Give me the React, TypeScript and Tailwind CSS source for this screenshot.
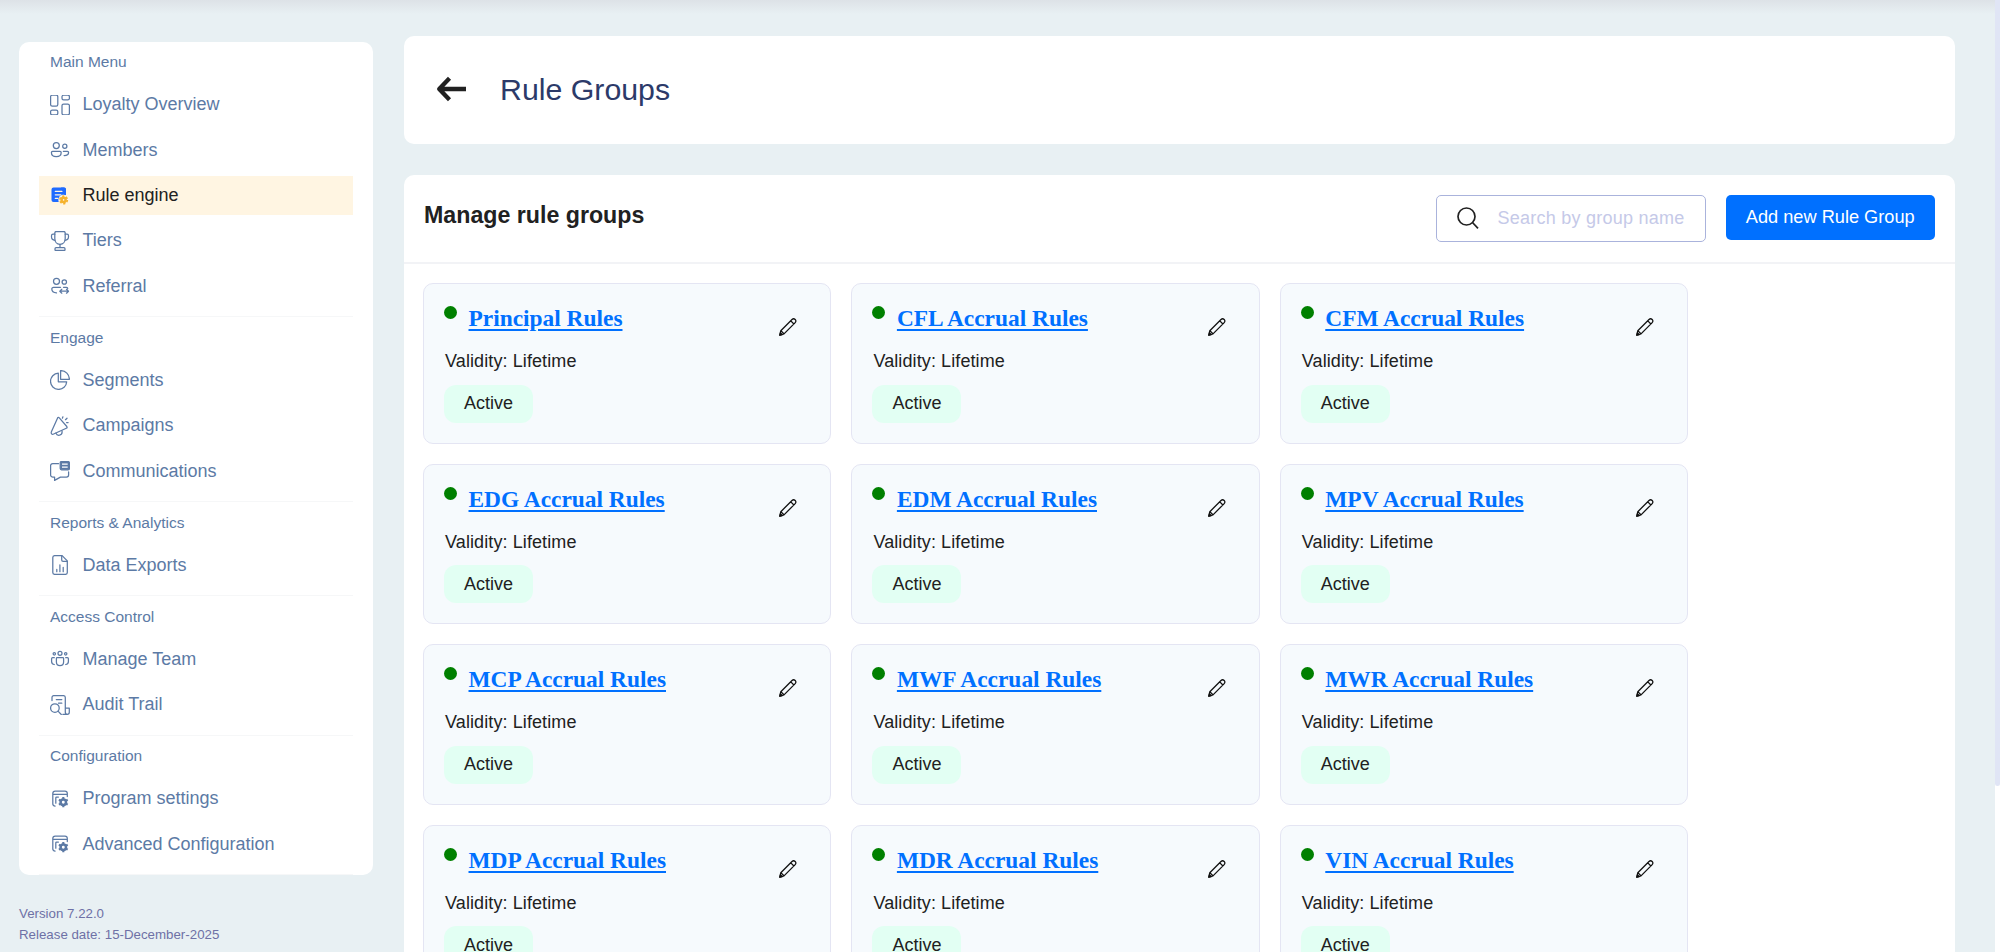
import type { ReactNode } from 'react'
import clsx from 'clsx'

function Icon({ children }: { children: ReactNode }) {
  return (
    <svg
      viewBox="0 0 20 20"
      className="size-5 shrink-0"
      fill="none"
      stroke="currentColor"
      strokeWidth="1.25"
      strokeLinecap="round"
      strokeLinejoin="round"
    >
      {children}
    </svg>
  )
}

const overviewIcon = (
  <Icon>
    <rect x="0.6" y="0.1" width="7.2" height="11" rx="1.6" />
    <rect x="12" y="0.1" width="7.400" height="4.800" rx="1.6" />
    <rect x="0.6" y="15" width="7.2" height="4.800" rx="1.6" />
    <rect x="12" y="9" width="7.4" height="10.800" rx="1.6" />
  </Icon>
)

const membersIcon = (
  <Icon>
    <circle cx="6.3" cy="5.5" r="3" />
    <circle cx="14.8" cy="6.2" r="2.1" />
    <path d="M2.6 11.3h7.5c.7 0 1.100.4 1.100 1.100 0 2.600-2 4.200-4.900 4.200s-4.900-1.600-4.900-4.200c0-.7.5-1.100 1.200-1.100zM13.4 11.400h4.100c.7 0 1.100.4 1.100 1 0 1.900-1.700 3.100-4.500 3.100" />
  </Icon>
)

const rulesIcon = (
  <Icon>
    <path
      d="M3.500 1.500h10.500a2 2 0 0 1 2 2v12.500H3.500a2 2 0 0 1-2-2V3.500a2 2 0 0 1 2-2z"
      fill="#1f6bff"
      stroke="none"
    />
    <path d="M5.300 5.300h7.700M5.300 8.800h5.500M5.300 12.300h2.500" stroke="#fff5e2" strokeWidth="1.300" />
    <circle cx="13.600" cy="13.900" r="5.300" fill="#fff5e2" stroke="none" />
    <path d="M11 1.500h3a2 2 0 0 1 2 2v5.500l-2.500-.5z" fill="#1f6bff" stroke="none" />
    <circle cx="13.600" cy="13.900" r="3.300" fill="#f5b22e" stroke="none" />
    <circle
      cx="13.600"
      cy="13.900"
      r="3.700"
      stroke="#f5b22e"
      strokeWidth="1.700"
      strokeDasharray="2.200 1.675"
      strokeLinecap="butt"
    />
    <circle cx="13.600" cy="13.900" r="0.800" fill="#fff5e2" stroke="none" />
  </Icon>
)

const tiersIcon = (
  <Icon>
    <path d="M4.800 2c0-.9.600-1.500 1.500-1.500h7.400c.9 0 1.500.6 1.500 1.500v5.500c0 3.100-2 5.800-5.200 5.800S4.800 10.600 4.800 7.500z" />
    <path d="M4.800 3.200H3c-1 0-1.500.7-1.500 1.600v1c0 2 1.600 3.300 3.500 3.500M15.200 3.200H17c1 0 1.500.7 1.500 1.600v1c0 2-1.600 3.300-3.500 3.500M10 13.300v2.900M6 16.700h8c.6 0 1 .4 1 1v1c0 .4-.3.700-.7.700H5.700c-.4 0-.7-.3-.7-.7v-1c0-.6.4-1 1-1z" />
  </Icon>
)

const referralIcon = (
  <Icon>
    <circle cx="6.500" cy="5.300" r="3" />
    <circle cx="14.300" cy="6" r="2.200" />
    <path d="M10.500 11.300H3.600c-1.200 0-1.800.8-1.800 1.700 0 2.300 1.700 3.700 4.700 3.900M13.500 11.300h3c.8 0 1.200.5 1.200 1.200M10 15.200h8.300M11.800 13.300l-2 1.900 2 2M16.500 13.300l2 1.900-2 2" />
  </Icon>
)

const segmentsIcon = (
  <Icon>
    <path d="M8.300 3.200a8.100 8.100 0 1 0 8.400 8.600H8.300z" />
    <path d="M10.600.6c5 0 8.800 3.700 8.800 8.700h-8.800z" />
  </Icon>
)

const campaignsIcon = (
  <Icon>
    <path d="M7.600 1.900c.4-.8 1.100-.8 1.700-.1l7.500 8.700c.6.800.4 1.400-.5 1.700L3.700 18c-1.800.8-3.100-.5-2.300-2.300z" />
    <path d="M5.900 17.100c.6 1.600 2 2.400 3.600 2.100 1.900-.4 2.900-2 2.500-4.300M12.400 2.200l.5-1.400M15.500 3.700l1.500-1.500M16.600 6.500h1.500" />
  </Icon>
)

const communicationsIcon = (
  <Icon>
    <path d="M8.500 2.700H2.700C1.400 2.700.6 3.500.6 4.800v9.300c0 1.200.8 2 2.100 2h1.900v3.300l5.800-3.300h6c1.300 0 2.200-.8 2.200-2v-3.200" />
    <rect x="10.200" y="0.600" width="9.200" height="8.200" rx="1.200" fill="currentColor" />
    <path d="M12 3.200h5.700M12 6.200h5.700" stroke="#fff" strokeLinecap="butt" />
  </Icon>
)

const exportsIcon = (
  <Icon>
    <path d="M4.900.6h7.200l5.200 5.300v11.500c0 1.200-.8 2-2 2H4.900c-1.300 0-2.100-.8-2.100-2V2.600c0-1.200.8-2 2.100-2z" />
    <path d="M11.700.8v4.100c0 .9.500 1.400 1.400 1.400h4M6.800 14.400v2.300M9.900 9.800v6.900M13.200 12.300v4.400" />
  </Icon>
)

const teamIcon = (
  <Icon>
    <circle cx="10" cy="4.300" r="2" />
    <circle cx="4.300" cy="4.800" r="1.200" />
    <circle cx="15.700" cy="4.800" r="1.200" />
    <path d="M7.200 8.700h5.600c.5 0 .8.300.8.800v3.400c0 2-1.500 3.600-3.600 3.600s-3.600-1.600-3.600-3.600V9.500c0-.5.300-.8.800-.8zM4.300 8.700H2.600c-.6 0-1 .4-1 1v2.800c0 1.700 1 2.800 2.700 3M15.700 8.700h1.700c.6 0 1 .4 1 1v2.800c0 1.700-1 2.800-2.700 3" />
  </Icon>
)

const auditIcon = (
  <Icon>
    <path d="M2 5.500V2.600C2 1.400 2.800.6 4 .6h9.300c1.200 0 2 .8 2 2v14.600c0 1.300.9 2.100 2 2.100s2-.9 2-2.100v-4h-4M17.300 19.300h-4.500M6.300 4.600h5.500M8.500 8.200h3.300" />
    <circle cx="4.900" cy="13.100" r="4.300" />
    <path d="M8 16.100l3.300 3.400" />
  </Icon>
)

const settingsIcon = (
  <Icon>
    <path d="M17.300 7.500V4.500c0-1.400-1-2.300-2.300-2.300H5.200C3.800 2.200 2.800 3.100 2.800 4.500v10.300c0 1.400.9 2.200 2.300 2.200M3 5.300h14M5.800 14.200V8.900c0-.6.300-.9.900-.9h1.700" />
    <circle cx="13.300" cy="13.200" r="2.700" strokeWidth="2.500" />
    <path
      d="M13.300 8.100v2.200M13.300 16.100v2.200M8.900 10.700l1.900 1.100M15.800 14.600l1.900 1.100M8.900 15.700l1.900-1.100M15.800 11.800l1.900-1.100"
      strokeWidth="2.100"
      strokeLinecap="butt"
    />
  </Icon>
)

const sections = [
  {
    title: 'Main Menu',
    items: [
      { label: 'Loyalty Overview', icon: overviewIcon },
      { label: 'Members', icon: membersIcon },
      { label: 'Rule engine', icon: rulesIcon, active: true },
      { label: 'Tiers', icon: tiersIcon },
      { label: 'Referral', icon: referralIcon },
    ],
  },
  {
    title: 'Engage',
    items: [
      { label: 'Segments', icon: segmentsIcon },
      { label: 'Campaigns', icon: campaignsIcon },
      { label: 'Communications', icon: communicationsIcon },
    ],
  },
  {
    title: 'Reports & Analytics',
    items: [{ label: 'Data Exports', icon: exportsIcon }],
  },
  {
    title: 'Access Control',
    items: [
      { label: 'Manage Team', icon: teamIcon },
      { label: 'Audit Trail', icon: auditIcon },
    ],
  },
  {
    title: 'Configuration',
    items: [
      { label: 'Program settings', icon: settingsIcon },
      { label: 'Advanced Configuration', icon: settingsIcon },
    ],
  },
]

const ruleGroups = [
  'Principal Rules',
  'CFL Accrual Rules',
  'CFM Accrual Rules',
  'EDG Accrual Rules',
  'EDM Accrual Rules',
  'MPV Accrual Rules',
  'MCP Accrual Rules',
  'MWF Accrual Rules',
  'MWR Accrual Rules',
  'MDP Accrual Rules',
  'MDR Accrual Rules',
  'VIN Accrual Rules',
]

function Sidebar() {
  return (
    <aside className="w-[354px] shrink-0">
      <nav className="rounded-[10px] bg-white px-5">
        {sections.map((section) => (
          <section key={section.title} className="border-b border-[#f6f7f8] pb-[4.3px]">
            <h2 className="flex h-[43.2px] items-center pb-[3px] pl-[11px] text-[15.5px]">{section.title}</h2>
            {section.items.map((item) => (
              <a
                key={item.label}
                className={clsx(
                  'mb-[5.8px] flex h-[39.7px] items-center gap-[12.5px] pl-[11px] text-[18px]',
                  'active' in item && 'bg-[#fff5e2] text-[#212121]',
                )}
              >
                {item.icon}
                {item.label}
              </a>
            ))}
          </section>
        ))}
      </nav>
      <footer className="mt-[29px] text-[13.3px] leading-[20.5px] text-[#6e71a6]">
        <p>Version 7.22.0</p>
        <p>Release date: 15-December-2025</p>
      </footer>
    </aside>
  )
}

function RuleGroupCard({ name }: { name: string }) {
  return (
    <article className="h-[160.5px] rounded-[10px] border border-[#e4e5f3] bg-[#f6fafd] px-5 pt-[19px]">
      <div className="flex h-[33px]">
        <span className="mt-[3px] size-[13px] shrink-0 rounded-full bg-[#008000]" />
        <a className="ml-[11.5px] font-['Liberation_Serif',serif] text-[23.4px] leading-[30px] font-bold text-[#0070ff] underline decoration-2 underline-offset-[3px]">
          {name}
        </a>
        <svg
          viewBox="0 0 18 18"
          className="mt-[15px] mr-[13px] ml-auto size-[18px]"
          fill="none"
          stroke="#111"
          strokeWidth="1.3"
          strokeLinejoin="round"
        >
          <path d="M.8 17.200l1-4.500L13 1.500c.9-.9 2.300-.9 3.200 0s.9 2.200 0 3.100L5 15.900zM1.900 12.700l3.200 3.200M11.800 2.900l3.100 3.100" />
          <path d="M.8 17.200l.6-2.400 1.800 1.800z" fill="#111" />
        </svg>
      </div>
      <p className="mt-[13px] pl-px text-[18px] leading-6 tracking-[0.1px]">Validity: Lifetime</p>
      <span className="mt-[11.5px] flex h-[38px] w-[89px] items-center justify-center rounded-xl bg-[#e2fff3] text-[18px]">
        Active
      </span>
    </article>
  )
}

export default function App() {
  return (
    <div className="relative flex h-[952px] overflow-hidden bg-[#e8f0f3] pl-[19px] font-['Liberation_Sans',Arial,sans-serif] text-[#5c7aa5]">
      <div className="absolute inset-x-0 top-0 h-3.5 bg-linear-to-b from-[#dde2e7] to-[#e8f0f3]" />
      <div className="relative flex grow">
        <div className="pt-[41.5px]">
          <Sidebar />
        </div>

        <main className="mt-[36.4px] mr-10 ml-[31px] flex grow flex-col gap-[30.5px]">
          <header className="flex h-[108px] shrink-0 items-center rounded-[10px] bg-white pb-0.5 pl-8">
            <svg viewBox="0 0 30 26" className="h-[26px] w-[30px]" fill="none" stroke="#212121" strokeWidth="4.3">
              <path d="M30 13H4M13.500 2.200L3.200 13l10.300 10.800" strokeLinejoin="round" />
            </svg>
            <h1 className="ml-[34px] text-[30.3px] text-[#2c3a69]">Rule Groups</h1>
          </header>

          <section className="h-[900px] shrink-0 rounded-t-[10px] bg-white text-[#212121]">
            <div className="flex h-[89px] items-start border-b-2 border-[#f2f3f6] px-5 pt-5">
              <h2 className="grow text-[23.2px] leading-[41px] font-bold">Manage rule groups</h2>
              <label className="flex h-[47px] w-[270px] items-center rounded-[5px] border border-[#aab3dc] pl-5">
                <svg
                  viewBox="0 0 22 22"
                  className="size-[22px] shrink-0"
                  fill="none"
                  stroke="#212121"
                  strokeWidth="1.7"
                >
                  <circle cx="9.500" cy="9.500" r="8.500" />
                  <path d="M15.500 15.500l5.500 5.800" />
                </svg>
                <input
                  placeholder="Search by group name"
                  className="ml-[19px] w-[205px] text-[18px] tracking-[0.25px] outline-none placeholder:text-[#c5c9e8]"
                />
              </label>
              <button className="ml-5 h-[45px] w-[209.5px] rounded-[5px] bg-[#0070ff] text-[18.2px] text-white">
                Add new Rule Group
              </button>
            </div>

            <div className="grid grid-cols-[repeat(3,408.4px)] gap-5 px-[19px] pt-[19.3px]">
              {ruleGroups.map((name) => (
                <RuleGroupCard key={name} name={name} />
              ))}
            </div>
          </section>
        </main>
      </div>
      <div className="relative w-[5px] shrink-0 bg-white">
        <div className="h-[786px] rounded-b-[3px] bg-[#e0e5f5]" />
      </div>
    </div>
  )
}
